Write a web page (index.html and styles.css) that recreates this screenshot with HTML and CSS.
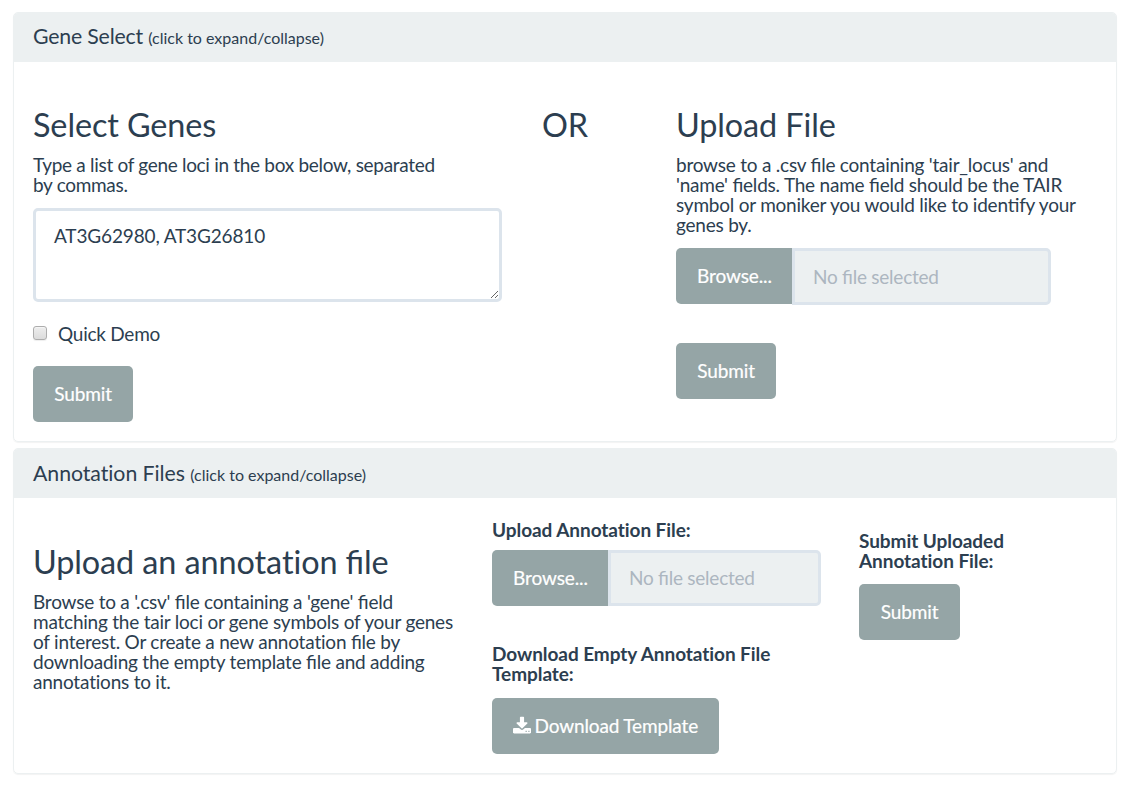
FILE: index.html
```html
<!DOCTYPE html>
<html lang="en">
<head>
<meta charset="utf-8">
<title>Gene Select</title>
<link rel="stylesheet" href="styles.css">
</head>
<body>
<section class="panel panel-genes">
  <header class="panel-heading">Gene Select <small>(click to expand/collapse)</small></header>
  <div class="panel-body genes">
    <div class="col-select">
      <h2>Select Genes</h2>
      <p>Type a list of gene loci in the box below, separated<br>by commas.</p>
      <textarea class="gene-box" spellcheck="false">AT3G62980, AT3G26810</textarea>
      <label class="check"><input type="checkbox"><span>Quick Demo</span></label>
      <button class="btn">Submit</button>
    </div>
    <h2 class="or">OR</h2>
    <div class="col-upload">
      <h2>Upload File</h2>
      <p>browse to a .csv file containing 'tair_locus' and<br>'name' fields. The name field should be the TAIR<br>symbol or moniker you would like to identify your<br>genes by.</p>
      <div class="file-input file-wide"><span class="btn browse">Browse...</span><span class="file-name">No file selected</span></div>
      <button class="btn">Submit</button>
    </div>
  </div>
</section>
<section class="panel panel-annotations">
  <header class="panel-heading">Annotation Files <small>(click to expand/collapse)</small></header>
  <div class="panel-body annotations">
    <div class="col-intro">
      <h2>Upload an annota<span class="no-lig">ti</span>on file</h2>
      <p>Browse to a '.csv' file containing a 'gene' field<br>matching the tair loci or gene symbols of your genes<br>of interest. Or create a new annota<span class="no-lig">ti</span>on file by<br>downloading the empty template file and adding<br>annota<span class="no-lig">ti</span>ons to it.</p>
    </div>
    <div class="col-files">
      <div class="label">Upload Annotation File:</div>
      <div class="file-input"><span class="btn browse">Browse...</span><span class="file-name">No file selected</span></div>
      <div class="label label-template">Download Empty Annotation File<br>Template:</div>
      <button class="btn btn-download"><svg class="icon" viewBox="0 0 1664 1536" aria-hidden="true"><path d="M1280 1216q0-26-19-45t-45-19-45 19-19 45 19 45 45 19 45-19 19-45zm256 0q0-26-19-45t-45-19-45 19-19 45 19 45 45 19 45-19 19-45zm128-224v320q0 40-28 68t-68 28H96q-40 0-68-28t-28-68V992q0-40 28-68t68-28h465l135 136q58 56 136 56t136-56l136-136h464q40 0 68 28t28 68zm-325-569q17 41-14 70l-448 448q-18 19-45 19t-45-19L339 493q-31-29-14-70 17-39 59-39h256V-64q0-26 19-45t45-19h256q26 0 45 19t19 45v448h256q42 0 59 39z"/></svg>Download Template</button>
    </div>
    <div class="col-submit">
      <div class="label">Submit Uploaded<br>Annotation File:</div>
      <button class="btn">Submit</button>
    </div>
  </div>
</section>
</body>
</html>
```
FILE: styles.css
```css
* { box-sizing: border-box; }
body {
  margin: 0;
  padding: 12px 11px 0 13px;
  background: #fff;
  color: #2c3e50;
  font: 19px/20px Lato, "Open Sans", sans-serif;
  overflow: hidden;
}
.panel {
  border: 1px solid #ecf0f1;
  border-radius: 5px;
  box-shadow: 0 1px 1px rgba(0, 0, 0, .05);
  margin-bottom: 6px;
}
.panel-genes { height: 430px; }
.panel-annotations { height: 326px; }
.panel-heading {
  height: 49px;
  padding: 12px 19px 0;
  background: #ecf0f1;
  border-radius: 4px 4px 0 0;
  font-size: 21.3px;
  line-height: 24px;
  letter-spacing: -.06px;
}
.panel-genes .panel-heading { padding-top: 11px; letter-spacing: -.19px; }
.panel .panel-heading small { font-size: 16px; letter-spacing: 0; }
.panel-body { display: grid; padding: 0 19px; }
.genes { grid-template-columns: 509px 134px 1fr; }
.annotations { grid-template-columns: 459px 367px 1fr; }
h2 {
  margin: 45px 0 12px;
  font-size: 32.4px;
  line-height: 37px;
  font-weight: 400;
  letter-spacing: -.1px;
  font-feature-settings: "liga" 1;
}
.genes h2 { margin: 44px 0 12px; }
p {
  margin: 0;
  white-space: nowrap;
  letter-spacing: -.225px;
  font-feature-settings: "liga" 1;
}
.col-select p { letter-spacing: -.31px; }
.no-lig { font-feature-settings: "liga" 0; }
.gene-box {
  display: block;
  width: 469px;
  height: 94px;
  margin-top: 13px;
  padding: 15px 18px;
  border: 3px solid #dce4ec;
  border-radius: 5px;
  background: #fff;
  color: #2c3e50;
  font: inherit;
  line-height: 20px;
  letter-spacing: -.15px;
  overflow: hidden;
  resize: both;
}
.check { display: flex; margin-top: 22px; height: 20px; gap: 11px; letter-spacing: -.25px; }
.check input {
  appearance: none;
  width: 14px;
  height: 14px;
  margin: 2px 0 0;
  border: 1px solid #adadad;
  border-radius: 3px;
  background: linear-gradient(#eee, #dcdcdc);
  box-shadow: inset 0 1px 0 #f5f5f5, 0 1px 1px #eee;
}
.btn {
  display: block;
  height: 56px;
  padding: 0 21px;
  border: 0;
  border-radius: 5px;
  background: #95a5a6;
  color: #fff;
  font: inherit;
  line-height: 56px;
  letter-spacing: -.1px;
  white-space: nowrap;
  -webkit-text-stroke: .2px #fff;
}
.col-select .btn { margin-top: 22px; width: 100px; }
.file-input { display: flex; width: 329px; height: 56px; margin-top: 10px; }
.file-wide { width: 375px; height: 57px; margin-top: 13px; }
.browse { width: 116px; height: 56px; border-radius: 5px 0 0 5px; }
.file-name {
  flex: 1;
  padding-left: 18px;
  border: 3px solid #dce4ec;
  border-radius: 0 5px 5px 0;
  background: #ecf0f1;
  color: #acb6c0;
  line-height: 51px;
  letter-spacing: -.25px;
  font-feature-settings: "liga" 1;
}
.annotations .file-name { line-height: 50px; }
.col-upload > .btn { margin-top: 38px; width: 100px; }
.label { font-weight: 700; white-space: nowrap; letter-spacing: -.06px; }
.col-files { padding-top: 22px; }
.label-template { margin-top: 38px; }
.btn-download { display: flex; align-items: center; width: 227px; margin-top: 14px; letter-spacing: -.14px; }
.icon { width: 18px; height: 17px; margin-right: 3.5px; fill: #fff; overflow: visible; }
.col-submit { padding-top: 33px; }
.col-submit .btn { margin-top: 13px; width: 101px; }
```
